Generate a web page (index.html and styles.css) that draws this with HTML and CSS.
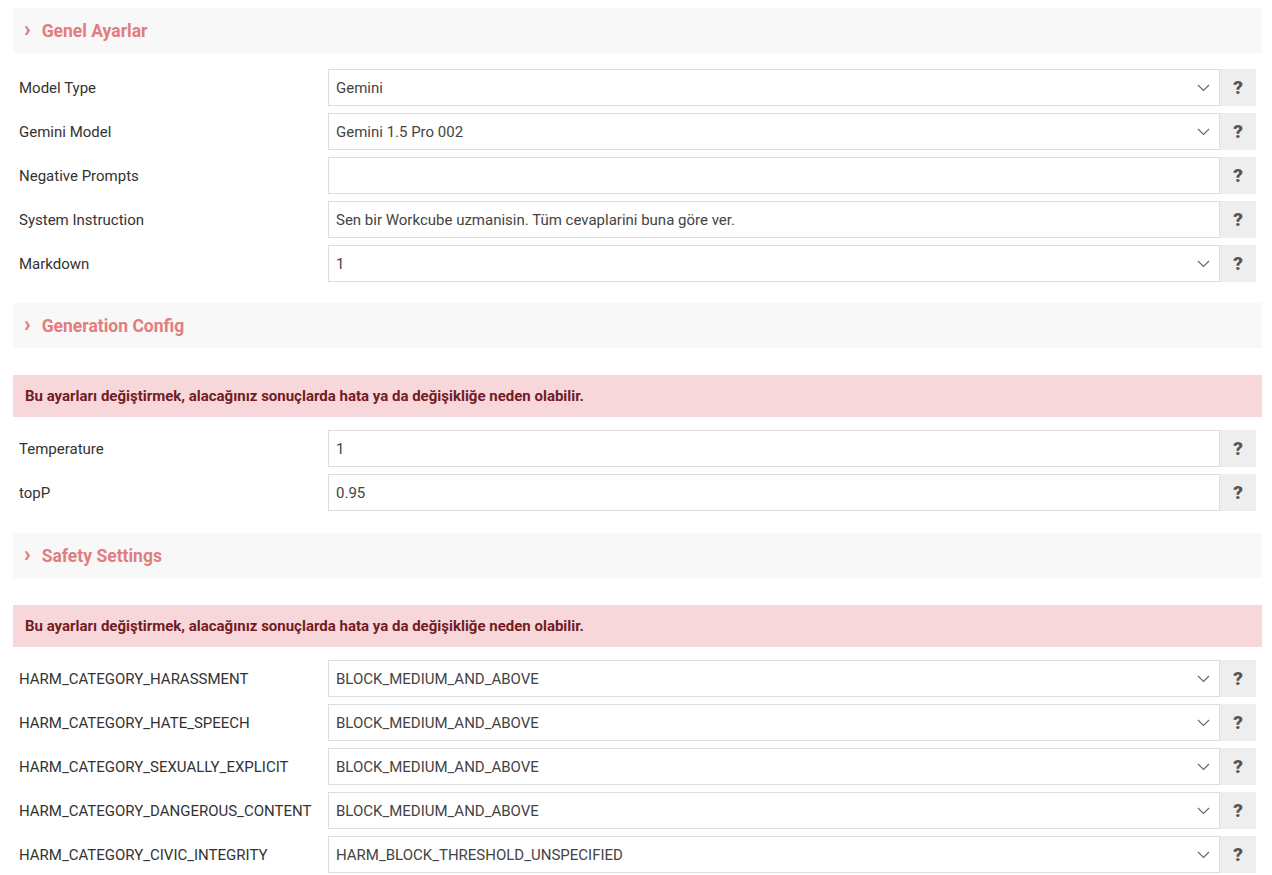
FILE: index.html
```html
<!DOCTYPE html>
<html lang="en">
<head>
    <meta charset="UTF-8">
    <meta name="viewport" content="width=device-width, initial-scale=1.0">
    <title>Ayarlar</title>
    <link rel="stylesheet" href="styles.css">
</head>
<body>

    <div class="page">

        <div class="section">
            <div class="section-head"><span class="caret">&#8250;</span> Genel Ayarlar</div>

            <div class="row">
                <label>Model Type</label>
                <div class="select">
                    <select><option>Gemini</option></select>
                    <svg class="chev" width="13" height="8" viewBox="0 0 13 8"><path d="M1 1 L6.5 6.5 L12 1" fill="none" stroke="#666" stroke-width="1.1"/></svg>
                </div>
                <span class="help">?</span>
            </div>
            <div class="row">
                <label>Gemini Model</label>
                <div class="select">
                    <select><option>Gemini 1.5 Pro 002</option></select>
                    <svg class="chev" width="13" height="8" viewBox="0 0 13 8"><path d="M1 1 L6.5 6.5 L12 1" fill="none" stroke="#666" stroke-width="1.1"/></svg>
                </div>
                <span class="help">?</span>
            </div>
            <div class="row">
                <label>Negative Prompts</label>
                <input type="text" value="">
                <span class="help">?</span>
            </div>
            <div class="row">
                <label>System Instruction</label>
                <input type="text" value="Sen bir Workcube uzmanisin. Tüm cevaplarini buna göre ver.">
                <span class="help">?</span>
            </div>
            <div class="row">
                <label>Markdown</label>
                <div class="select">
                    <select><option>1</option></select>
                    <svg class="chev" width="13" height="8" viewBox="0 0 13 8"><path d="M1 1 L6.5 6.5 L12 1" fill="none" stroke="#666" stroke-width="1.1"/></svg>
                </div>
                <span class="help">?</span>
            </div>
        </div>

        <div class="section">
            <div class="section-head"><span class="caret">&#8250;</span> Generation Config</div>
            <div class="alert">Bu ayarları değiştirmek, alacağınız sonuçlarda hata ya da değişikliğe neden olabilir.</div>

            <div class="row">
                <label>Temperature</label>
                <input type="text" value="1">
                <span class="help">?</span>
            </div>
            <div class="row">
                <label>topP</label>
                <input type="text" value="0.95">
                <span class="help">?</span>
            </div>
        </div>

        <div class="section">
            <div class="section-head"><span class="caret">&#8250;</span> Safety Settings</div>
            <div class="alert">Bu ayarları değiştirmek, alacağınız sonuçlarda hata ya da değişikliğe neden olabilir.</div>

            <div class="row">
                <label>HARM_CATEGORY_HARASSMENT</label>
                <div class="select">
                    <select><option>BLOCK_MEDIUM_AND_ABOVE</option></select>
                    <svg class="chev" width="13" height="8" viewBox="0 0 13 8"><path d="M1 1 L6.5 6.5 L12 1" fill="none" stroke="#666" stroke-width="1.1"/></svg>
                </div>
                <span class="help">?</span>
            </div>
            <div class="row">
                <label>HARM_CATEGORY_HATE_SPEECH</label>
                <div class="select">
                    <select><option>BLOCK_MEDIUM_AND_ABOVE</option></select>
                    <svg class="chev" width="13" height="8" viewBox="0 0 13 8"><path d="M1 1 L6.5 6.5 L12 1" fill="none" stroke="#666" stroke-width="1.1"/></svg>
                </div>
                <span class="help">?</span>
            </div>
            <div class="row">
                <label>HARM_CATEGORY_SEXUALLY_EXPLICIT</label>
                <div class="select">
                    <select><option>BLOCK_MEDIUM_AND_ABOVE</option></select>
                    <svg class="chev" width="13" height="8" viewBox="0 0 13 8"><path d="M1 1 L6.5 6.5 L12 1" fill="none" stroke="#666" stroke-width="1.1"/></svg>
                </div>
                <span class="help">?</span>
            </div>
            <div class="row">
                <label>HARM_CATEGORY_DANGEROUS_CONTENT</label>
                <div class="select">
                    <select><option>BLOCK_MEDIUM_AND_ABOVE</option></select>
                    <svg class="chev" width="13" height="8" viewBox="0 0 13 8"><path d="M1 1 L6.5 6.5 L12 1" fill="none" stroke="#666" stroke-width="1.1"/></svg>
                </div>
                <span class="help">?</span>
            </div>
            <div class="row">
                <label>HARM_CATEGORY_CIVIC_INTEGRITY</label>
                <div class="select">
                    <select><option>HARM_BLOCK_THRESHOLD_UNSPECIFIED</option></select>
                    <svg class="chev" width="13" height="8" viewBox="0 0 13 8"><path d="M1 1 L6.5 6.5 L12 1" fill="none" stroke="#666" stroke-width="1.1"/></svg>
                </div>
                <span class="help">?</span>
            </div>
        </div>

    </div>

</body>
</html>
```

FILE: styles.css
```css
body { margin: 0; font-family: Roboto, "Liberation Sans", sans-serif; font-size: 15px; color: #333; background: #fff; }
.page { padding: 8px 10px 0 13px; display: flex; flex-direction: column; }
.section { margin-bottom: 14px; display: flex; flex-direction: column; }
.section-head { height: 45px; display: flex; align-items: center; padding-left: 11px; background: #f8f8f8; color: #e27d7f; font-size: 17.5px; font-weight: 700; margin-bottom: 16px; }
.caret { font-size: 22px; font-weight: 900; margin-right: 11px; line-height: 1; position: relative; top: -2px; }
.alert { background: #f8d7da; color: #721c24; font-weight: 700; font-size: 15px; height: 42px; display: flex; align-items: center; padding-left: 12px; margin: 11px 0 13px; }
.section + .section + .section { margin-top: 1px; }
.row { display: flex; align-items: stretch; height: 37px; margin-bottom: 7px; padding: 0 6px; }
.row label { width: 309px; display: flex; align-items: center; color: #333; }
.row input, .select select { flex: 1; min-width: 0; height: 37px; box-sizing: border-box; border: 1px solid #ddd; padding: 0 7px; font-family: inherit; font-size: 15px; color: #444; background: #fff; outline: none; margin: 0; }
.select { flex: 1; display: flex; position: relative; }
.select select { appearance: none; -webkit-appearance: none; border-radius: 0; }
.chev { position: absolute; right: 10px; top: 15px; }
.help { width: 36px; display: flex; align-items: center; justify-content: center; background: #eee; color: #555; font-weight: 900; font-size: 19px; }
```
